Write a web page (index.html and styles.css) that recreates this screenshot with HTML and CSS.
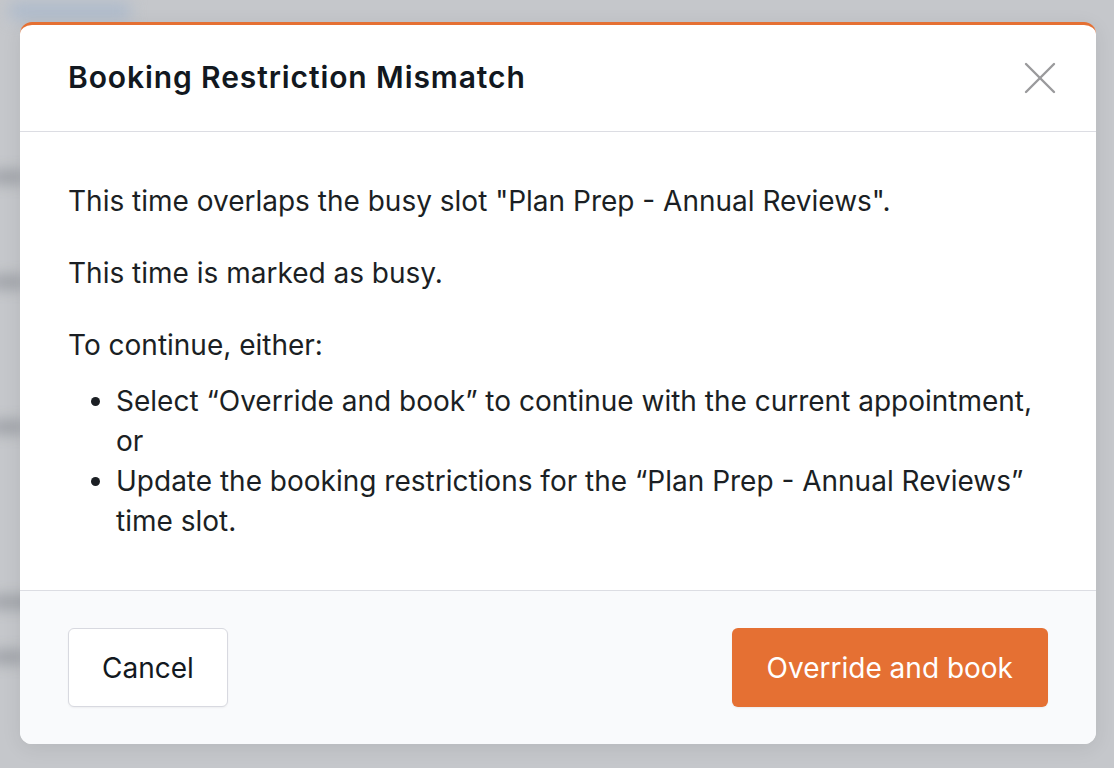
FILE: index.html
```html
<!DOCTYPE html>
<html lang="en">
<head>
    <meta charset="UTF-8">
    <meta name="viewport" content="width=device-width, initial-scale=1.0">
    <title>Booking Restriction Mismatch</title>
    <link rel="stylesheet" href="styles.css">
</head>
<body>
    <!-- page behind the dialog, dimmed and blurred -->
    <div class="backdrop">
        <span class="blur-link"></span>
        <span class="blur-row row-a"></span>
        <span class="blur-row row-b"></span>
        <span class="blur-row row-c"></span>
        <span class="blur-row row-d"></span>
        <span class="blur-row row-e"></span>
    </div>

    <div class="modal">
        <div class="modal-header">
            <h2>Booking Restriction Mismatch</h2>
            <button class="close-btn" aria-label="Close">
                <svg width="32" height="32" viewBox="0 0 32 32" fill="none" stroke="currentColor" stroke-width="2.4" stroke-linecap="round">
                    <line x1="2" y1="2" x2="30" y2="30"/>
                    <line x1="30" y1="2" x2="2" y2="30"/>
                </svg>
            </button>
        </div>

        <div class="modal-body">
            <p>This time overlaps the busy slot "Plan Prep - Annual Reviews".</p>
            <p>This time is marked as busy.</p>
            <p class="lead">To continue, either:</p>
            <ul>
                <li>Select “Override and book” to continue with the current appointment, or</li>
                <li>Update the booking restrictions for the “Plan Prep - Annual Reviews” time slot.</li>
            </ul>
        </div>

        <div class="modal-footer">
            <button class="cancel-btn">Cancel</button>
            <button class="override-btn">Override and book</button>
        </div>
    </div>
</body>
</html>
```

FILE: styles.css
```css
body {
    margin: 0;
    height: 768px;
    overflow: hidden;
    font-family: Inter, "Noto Sans", Arial, sans-serif;
    background-color: #c5c7cb;
    padding: 22px 18px 0 20px;
    box-sizing: border-box;
}

.backdrop {
    position: absolute;
    inset: 0;
    z-index: 0;
    overflow: hidden;
}

.blur-link {
    position: absolute;
    left: 10px;
    top: 4px;
    width: 120px;
    height: 14px;
    background-color: #a8b8cc;
    filter: blur(8px);
}

.blur-row {
    position: absolute;
    left: -10px;
    width: 36px;
    height: 14px;
    background-color: #9fa2a8;
    filter: blur(7px);
}

.row-a { top: 170px; }
.row-b { top: 275px; }
.row-c { top: 420px; }
.row-d { top: 595px; width: 44px; }
.row-e { top: 650px; }

.modal {
    position: relative;
    z-index: 1;
    width: 1076px;
    background-color: white;
    border-top: 3px solid #e57033;
    border-radius: 12px;
    overflow: hidden;
    box-shadow: 0 4px 20px rgba(0,0,0,0.08);
}

.modal-header {
    display: flex;
    align-items: center;
    justify-content: space-between;
    height: 106px;
    padding: 0 40px 0 48px;
    border-bottom: 1px solid #dcdde3;
}

.modal-header h2 {
    margin: 0;
    font-size: 30px;
    line-height: 36px;
    font-weight: 600;
    letter-spacing: 0.9px;
    color: #121820;
    padding-bottom: 2px;
}

.close-btn {
    display: flex;
    padding: 0;
    border: none;
    background: none;
    color: #9a9a9c;
    cursor: pointer;
}

.modal-body {
    padding: 49px 48px 49px 48px;
    font-size: 28px;
    line-height: 40px;
    color: #1b1f24;
}

.modal-body p {
    margin: 0 0 32px 0;
}

.modal-body p.lead {
    margin-bottom: 16px;
}

.modal-body ul {
    margin: 0;
    padding-left: 48px;
}

.modal-footer {
    display: flex;
    justify-content: space-between;
    align-items: center;
    padding: 37px 48px;
    background-color: #f9fafc;
    border-top: 1px solid #dcdde3;
}

.modal-footer button {
    height: 79px;
    padding: 0 33px;
    border-radius: 6px;
    font-family: inherit;
    font-size: 28px;
    cursor: pointer;
}

.modal-footer .cancel-btn {
    background-color: white;
    color: #121820;
    border: 1px solid #d8d9e0;
    box-shadow: 0 1px 2px rgba(0,0,0,0.05);
}

.modal-footer .override-btn {
    background-color: #e57033;
    color: white;
    border: none;
    padding: 0 35px;
    box-shadow: 0 1px 2px rgba(0,0,0,0.06);
}
```
